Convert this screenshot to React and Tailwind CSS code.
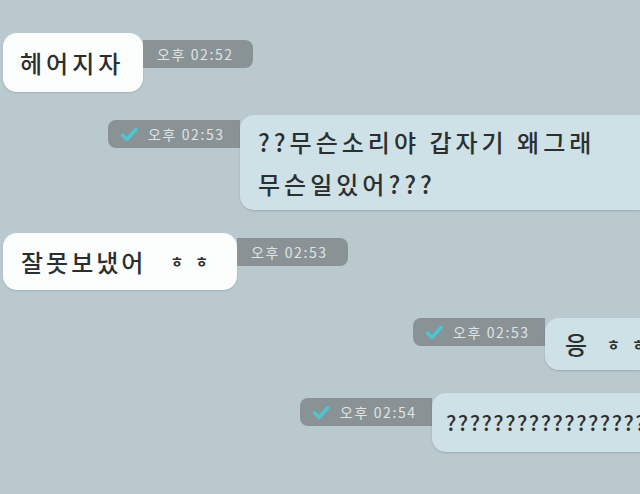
import React from "react";

const font = { fontFamily: '"Noto Sans CJK KR", "Noto Sans", sans-serif' };

const Check = () => (
  <svg width="18" height="15" viewBox="0 0 18 15" className="shrink-0">
    <path d="M2.5 8 L7 12.5 L16 2.5" fill="none" stroke="#4cc6d2" strokeWidth="3.4" strokeLinecap="round" strokeLinejoin="round" />
  </svg>
);

const TimeBadge = ({ time, side, check }) => (
  <div
    className={`h-[28px] flex items-center gap-[10px] bg-[#899295] text-[#e0e4e5] text-[14px] tracking-[1.6px] whitespace-nowrap ${
      side === "left" ? "rounded-r-[8px] pl-[14px]" : "rounded-l-[8px] pl-[12px]"
    }`}
  >
    {check && <Check />}
    <span>{time}</span>
  </div>
);

const LeftMsg = ({ text, time, bubbleClass, badgeClass }) => (
  <div className="flex items-start pl-[3px]">
    <div className={`bg-[#fbfdfd] rounded-[14px] shadow-[0_1px_2px_rgba(0,0,0,0.12)] flex items-center text-[#2b2e2f] font-medium whitespace-nowrap ${bubbleClass}`}>
      {text}
    </div>
    <div className={badgeClass}>
      <TimeBadge time={time} side="left" />
    </div>
  </div>
);

const RightMsg = ({ children, time, pad, bubbleClass, badgeClass }) => (
  <div className={`flex items-start ${pad}`}>
    <div className={badgeClass}>
      <TimeBadge time={time} side="right" check />
    </div>
    <div className={`flex-1 bg-[#cee1e7] rounded-l-[14px] shadow-[0_1px_2px_rgba(0,0,0,0.15)] text-[#2b2f30] font-medium whitespace-nowrap overflow-hidden ${bubbleClass}`}>
      {children}
    </div>
  </div>
);

export default function App() {
  return (
    <div className="w-[640px] h-[494px] overflow-hidden bg-[#b9c9ce]" style={font}>
      <div className="flex flex-col pt-[33px]">
        <LeftMsg
          text="헤어지자"
          time="오후 02:52"
          bubbleClass="w-[140px] h-[59px] pl-[17px] text-[24px] tracking-[4px]"
          badgeClass="mt-[7px] w-[110px]"
        />

        <div className="mt-[23px]">
          <RightMsg
            time="오후 02:53"
            pad="pl-[108px]"
            bubbleClass="h-[95px] pl-[18px] pt-[6px] text-[24px] leading-[42px] tracking-[4px]"
            badgeClass="mt-[5px] w-[132px]"
          >
            <div>??무슨소리야 갑자기 왜그래</div>
            <div>무슨일있어???</div>
          </RightMsg>
        </div>

        <div className="mt-[23px]">
          <LeftMsg
            text={
              <>
                <span>잘못보냈어</span>
                <span className="ml-[24px] text-[14px] font-bold tracking-[12px]">ㅎㅎ</span>
              </>
            }
            time="오후 02:53"
            bubbleClass="w-[234px] h-[57px] pl-[18px] text-[24px] tracking-[3px]"
            badgeClass="mt-[5px] w-[111px]"
          />
        </div>

        <div className="mt-[28px]">
          <RightMsg
            time="오후 02:53"
            pad="pl-[413px]"
            bubbleClass="h-[52px] pl-[20px] flex items-center text-[24px]"
            badgeClass="w-[132px]"
          >
            <span>응</span>
            <span className="ml-[20px] text-[14px] font-bold tracking-[12px]">ㅎㅎ</span>
          </RightMsg>
        </div>

        <div className="mt-[23px]">
          <RightMsg
            time="오후 02:54"
            pad="pl-[300px]"
            bubbleClass="h-[59px] pl-[14px] flex items-center text-[21px]"
            badgeClass="mt-[5px] w-[132px]"
          >
            <span className="tracking-[1.5px]">?????????????????</span>
          </RightMsg>
        </div>
      </div>
    </div>
  );
}
